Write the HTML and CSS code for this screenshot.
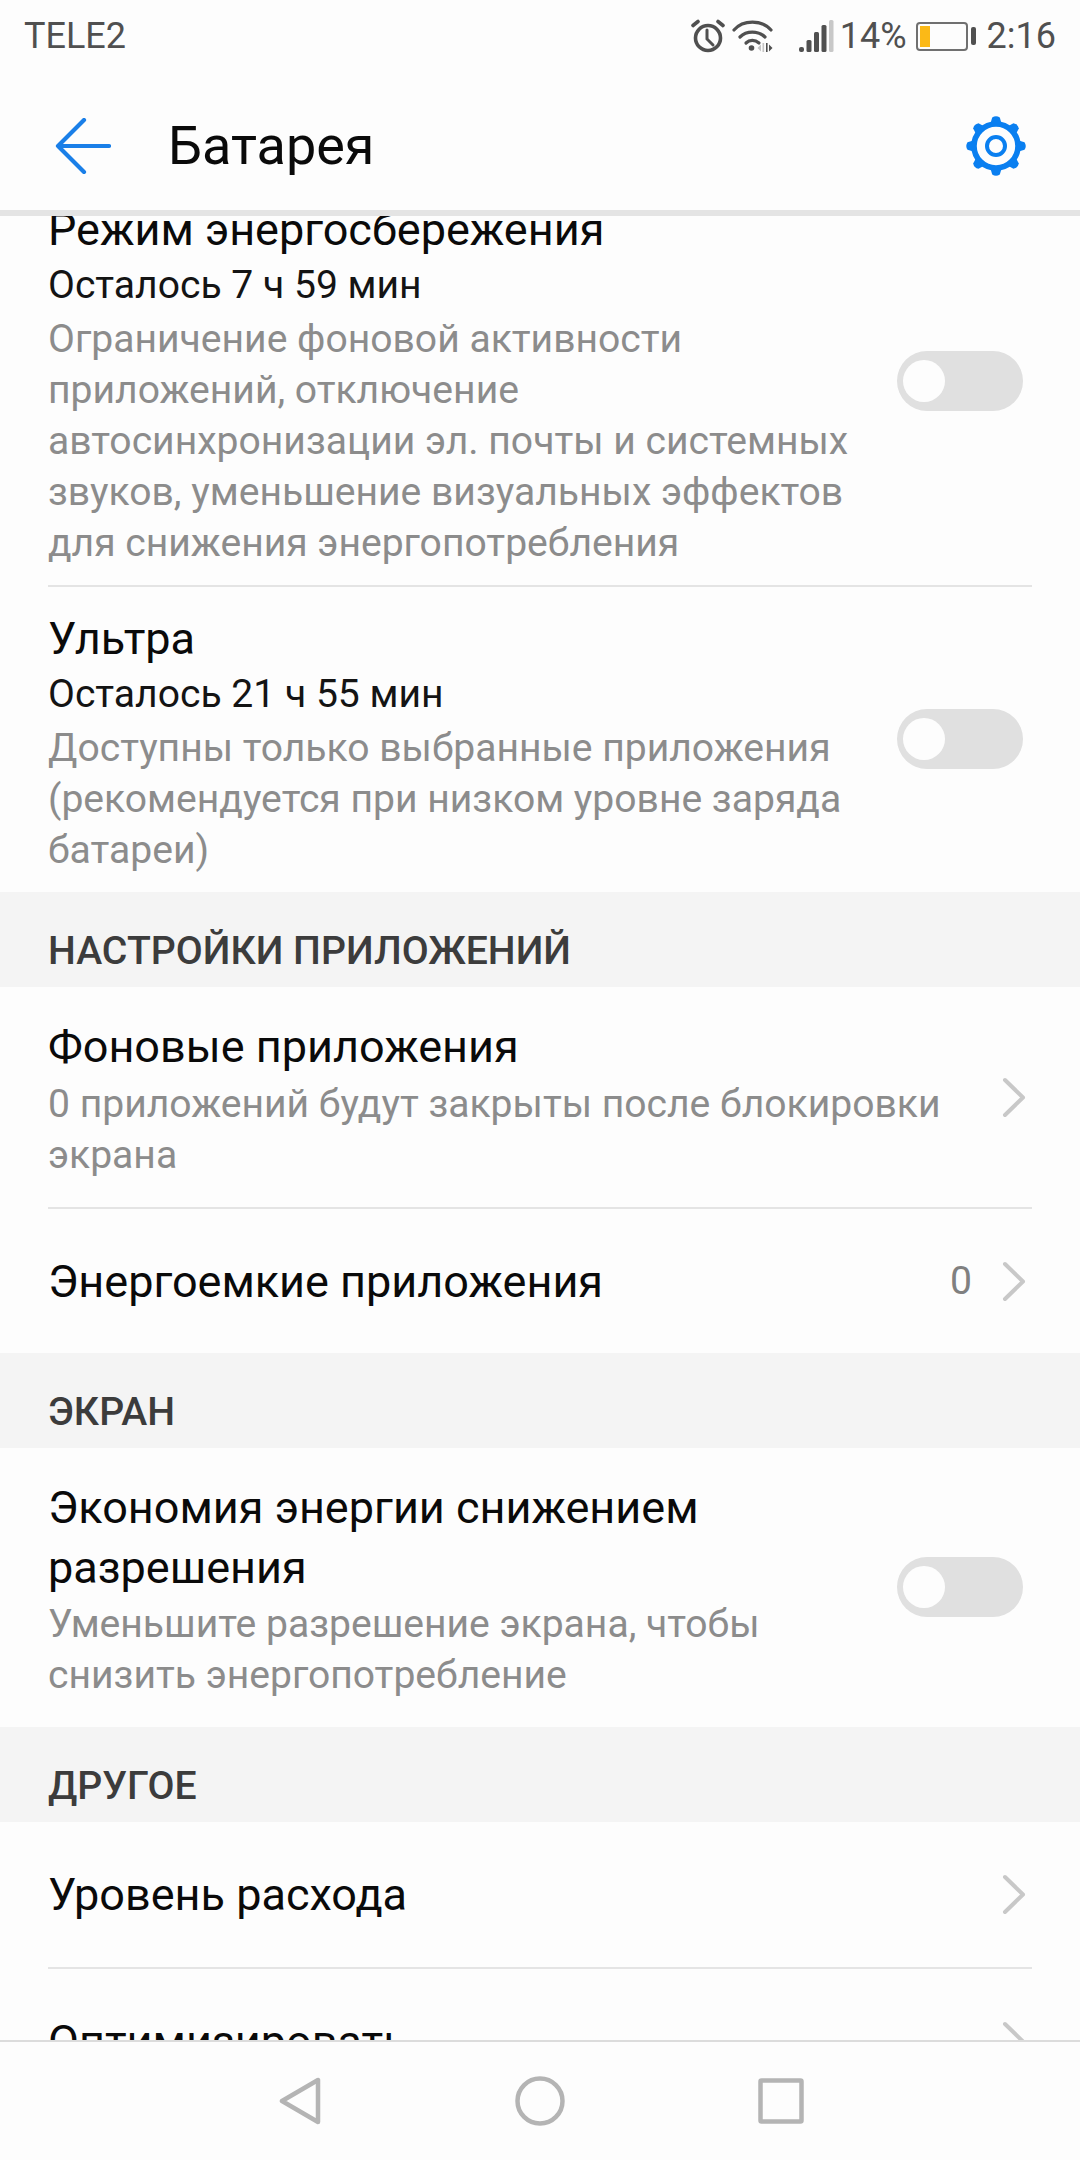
FILE: index.html
```html
<!DOCTYPE html>
<html lang="ru">
<head>
<meta charset="utf-8">
<title>Батарея</title>
<link rel="stylesheet" href="styles.css">
</head>
<body>
<div class="phone">
  <header class="status">
    <span class="carrier">TELE2</span>
    <div class="status-right">
      <svg class="ic-alarm" width="34" height="34" viewBox="0 0 34 34" fill="none" stroke="#505050" stroke-width="3.6" stroke-linecap="round"><circle cx="17" cy="19" r="12.500"/><path d="M16 11v9l6 6" stroke-width="3"/><path d="M2 6.500 7 2.500M32 6.500l-5-4"/></svg>
      <svg class="ic-wifi" width="42" height="34" viewBox="0 0 42 34" fill="none" stroke="#505050" stroke-width="3.200" stroke-linecap="round"><path d="M2 11C11 .5 30 .5 39 11"/><path d="M8 18c6.500-6.500 18-6.500 25 0"/><path d="M14 24c3.500-3.500 9-3.500 13 0"/><circle cx="19.500" cy="29" r="2.800" fill="#505050" stroke="none"/><path d="M29 25.500l-3.500 3.500 3.500 3.500z" fill="#c4c4c4" stroke="none"/><path d="M30.500 24h1.600v9h-1.600z" fill="#c4c4c4" stroke="none"/><path d="M34 24h1.600v9H34z" fill="#505050" stroke="none"/><path d="M37 25.500l3.500 3.500-3.500 3.500z" fill="#505050" stroke="none"/></svg>
      <svg class="ic-signal" width="35" height="34" viewBox="0 0 35 34"><g fill="#505050"><rect x="0" y="28" width="5" height="5" rx="2"/><rect x="7.500" y="21" width="5" height="12" rx="1.500"/><rect x="15" y="13" width="5" height="20" rx="1.500"/><rect x="22.500" y="6" width="5" height="27" rx="1.500"/></g><rect x="30" y="1" width="4.500" height="32" rx="1.500" fill="#c8c8c8"/></svg>
      <span class="pct">14%</span>
      <div class="battery"><div class="battery-body"><div class="battery-fill"></div></div><div class="battery-cap"></div></div>
      <span class="time">2:16</span>
    </div>
  </header>
  <div class="appbar">
    <svg class="ic-back" width="56" height="56" viewBox="0 0 56 56" fill="none" stroke="#1a7fe8" stroke-width="4.200" stroke-linecap="round" stroke-linejoin="round"><path d="M29 2 3 28l26 26M3 28h51"/></svg>
    <h1 class="title">Батарея</h1>
    <svg class="ic-gear" width="62" height="62" viewBox="-31 -31 62 62" fill="#0a7ff0">
      <circle r="22" fill="none" stroke="#0a7ff0" stroke-width="5.600"/>
      <circle r="9" fill="none" stroke="#0a7ff0" stroke-width="4"/>
      <path d="M-6-21-3.800-28.500q3.800-2.500 7.600 0L6-21z"/>
      <path transform="rotate(45)" d="M-6-21-3.800-28.500q3.800-2.500 7.600 0L6-21z"/>
      <path transform="rotate(90)" d="M-6-21-3.800-28.500q3.800-2.500 7.600 0L6-21z"/>
      <path transform="rotate(135)" d="M-6-21-3.800-28.500q3.800-2.500 7.600 0L6-21z"/>
      <path transform="rotate(180)" d="M-6-21-3.800-28.500q3.800-2.500 7.600 0L6-21z"/>
      <path transform="rotate(225)" d="M-6-21-3.800-28.500q3.800-2.500 7.600 0L6-21z"/>
      <path transform="rotate(270)" d="M-6-21-3.800-28.500q3.800-2.500 7.600 0L6-21z"/>
      <path transform="rotate(315)" d="M-6-21-3.800-28.500q3.800-2.500 7.600 0L6-21z"/>
    </svg>
  </div>
  <main class="scroll">
    <section class="group first">
      <div class="row with-divider">
        <div class="row-text state">
          <div class="row-title">Режим энергосбережения</div>
          <div class="row-note">Осталось 7 ч 59 мин</div>
          <div class="row-desc">Ограничение фоновой активности<br>приложений, отключение<br>автосинхронизации эл. почты и системных<br>звуков, уменьшение визуальных эффектов<br>для снижения энергопотребления</div>
        </div>
        <div class="toggle"><div class="knob"></div></div>
      </div>
      <div class="row">
        <div class="row-text state">
          <div class="row-title">Ультра</div>
          <div class="row-note">Осталось 21 ч 55 мин</div>
          <div class="row-desc">Доступны только выбранные приложения<br>(рекомендуется при низком уровне заряда<br>батареи)</div>
        </div>
        <div class="toggle"><div class="knob"></div></div>
      </div>
    </section>
    <h2 class="section-head">НАСТРОЙКИ ПРИЛОЖЕНИЙ</h2>
    <section class="group">
      <div class="row with-divider">
        <div class="row-text sub">
          <div class="row-title">Фоновые приложения</div>
          <div class="row-desc">0 приложений будут закрыты после блокировки<br>экрана</div>
        </div>
        <svg class="chev" width="26" height="41" viewBox="0 0 26 41" fill="none" stroke="#c8c8c8" stroke-width="4" stroke-linecap="round" stroke-linejoin="round"><path d="M5 3l18 17.500L5 38"/></svg>
      </div>
      <div class="row single">
        <div class="row-text"><div class="row-title">Энергоемкие приложения</div></div>
        <span class="count">0</span>
        <svg class="chev" width="26" height="41" viewBox="0 0 26 41" fill="none" stroke="#c8c8c8" stroke-width="4" stroke-linecap="round" stroke-linejoin="round"><path d="M5 3l18 17.500L5 38"/></svg>
      </div>
    </section>
    <h2 class="section-head">ЭКРАН</h2>
    <section class="group">
      <div class="row">
        <div class="row-text long">
          <div class="row-title wrap">Экономия энергии снижением<br>разрешения</div>
          <div class="row-desc">Уменьшите разрешение экрана, чтобы<br>снизить энергопотребление</div>
        </div>
        <div class="toggle"><div class="knob"></div></div>
      </div>
    </section>
    <h2 class="section-head">ДРУГОЕ</h2>
    <section class="group">
      <div class="row single with-divider">
        <div class="row-text"><div class="row-title">Уровень расхода</div></div>
        <svg class="chev" width="26" height="41" viewBox="0 0 26 41" fill="none" stroke="#c8c8c8" stroke-width="4" stroke-linecap="round" stroke-linejoin="round"><path d="M5 3l18 17.500L5 38"/></svg>
      </div>
      <div class="row single">
        <div class="row-text"><div class="row-title">Оптимизировать</div></div>
        <svg class="chev" width="26" height="41" viewBox="0 0 26 41" fill="none" stroke="#c8c8c8" stroke-width="4" stroke-linecap="round" stroke-linejoin="round"><path d="M5 3l18 17.500L5 38"/></svg>
      </div>
    </section>
  </main>
  <nav class="navbar">
    <svg width="42" height="48" viewBox="0 0 42 48" fill="none" stroke="#b4b4b4" stroke-width="4.500" stroke-linejoin="round"><path d="M39 3v42L3 24z"/></svg>
    <svg width="50" height="50" viewBox="0 0 50 50" fill="none" stroke="#b4b4b4" stroke-width="4.500"><circle cx="25" cy="25" r="22.500"/></svg>
    <svg width="46" height="46" viewBox="0 0 46 46" fill="none" stroke="#b4b4b4" stroke-width="4.500" stroke-linejoin="round"><rect x="2.500" y="2.500" width="41" height="41" rx="1"/></svg>
  </nav>
</div>
</body>
</html>
```
FILE: styles.css
```css
* { box-sizing: border-box; }
html, body { margin: 0; padding: 0; }
body { font-family: Roboto, "Noto Sans", sans-serif; background: #fdfdfd; }
.phone { width: 1080px; height: 2160px; display: flex; flex-direction: column; overflow: hidden; background: #fdfdfd; }

.status { height: 72px; flex: none; display: flex; align-items: center; justify-content: space-between; padding: 0 24px; color: #505050; font-size: 36px; }
.status-right { display: flex; align-items: center; }
.ic-alarm { margin-right: 7px; }
.ic-wifi { margin-right: 25px; }
.ic-signal { margin-right: 6px; }
.pct { margin-right: 9px; }
.battery { display: flex; align-items: center; margin-right: 11px; }
.battery-body { width: 52px; height: 29px; border: 2px solid #707070; border-radius: 4px; padding: 2px; background: #fdfdfd; }
.battery-fill { width: 10px; height: 100%; background: #fbb917; }
.battery-cap { width: 5px; height: 18px; background: #505050; margin-left: 3px; border-radius: 2px; }

.appbar { height: 138px; flex: none; display: flex; align-items: center; padding: 9px 53px 0 55px; }
.title { flex: 1; margin: 0 0 0 57px; font-weight: 400; font-size: 54px; color: #0a0a0a; }
.ic-gear { flex: none; }

.scroll { flex: 1; min-height: 0; overflow: hidden; border-top: 6px solid #e4e4e4; }
.first { margin-top: -38px; }
.group { background: #fdfdfd; }
.row { margin: 0 48px; display: flex; align-items: center; }
.row.with-divider { border-bottom: 2px solid #e4e4e4; }
.row.single { height: 144px; }
.row.single.with-divider { height: 147px; }
.row-text { flex: 1; min-width: 0; }
.row-text.state { padding: 25px 0 16px; }
.row-text.sub { padding: 33px 0 26px; }
.row-text.sub .row-desc { margin-top: 6px; }
.row-text.long { padding: 30px 0 26px; }
.row-text.long .row-desc { margin-top: 1px; }
.row-title { font-size: 45px; line-height: 53px; color: #0a0a0a; }
.row-title.wrap { line-height: 60px; }
.row-note { font-size: 39.1px; line-height: 58px; color: #141414; }
.row-desc { font-size: 39.1px; line-height: 51px; color: #8c8c8c; }
.section-head { margin: 0; height: 95px; background: #f4f4f4; padding: 38px 48px 0; font-size: 39.2px; line-height: 42px; font-weight: 500; color: #3c3c3c; }
.toggle { width: 126px; height: 60px; border-radius: 30px; background: #e0e0e0; padding: 9px 6px; flex: none; margin: 0 9px 2px 0; }
.knob { width: 42px; height: 42px; border-radius: 50%; background: #fdfdfd; }
.chev { flex: none; margin-left: 28px; margin-right: 6px; }
.count { font-size: 39.2px; color: #808080; }

.navbar { height: 120px; flex: none; display: flex; align-items: center; padding-left: 279px; gap: 193.5px; background: #fdfdfd; border-top: 2px solid #dcdcdc; }
```
